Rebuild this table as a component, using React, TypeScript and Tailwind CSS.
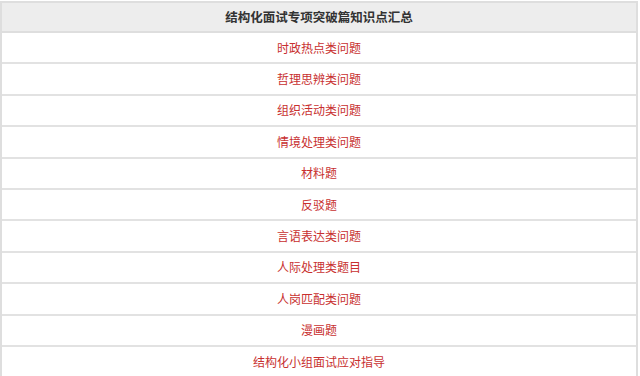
const items = [
  "时政热点类问题",
  "哲理思辨类问题",
  "组织活动类问题",
  "情境处理类问题",
  "材料题",
  "反驳题",
  "言语表达类问题",
  "人际处理类题目",
  "人岗匹配类问题",
  "漫画题",
  "结构化小组面试应对指导",
];

const App = () => {
  return (
    <div
      className="w-[640px] h-[376px] overflow-hidden bg-white pt-px"
      style={{ fontFamily: '"Noto Sans CJK SC", "Noto Sans", sans-serif' }}
    >
      <div className="w-[638px] border-t-2 border-x-2 border-[#dedede]">
        {/* Header */}
        <div className="h-[30px] bg-[#ededed] flex items-center justify-center border-b-2 border-[#dedede]">
          <span className="text-[12.5px] font-bold text-[#333]">结构化面试专项突破篇知识点汇总</span>
        </div>

        {/* Rows */}
        {items.map((item) => (
          <div
            key={item}
            className="h-[31.4px] flex items-center justify-center border-b-2 border-[#e2e2e2]"
          >
            <span className="text-[12px] text-[#c8302f]">{item}</span>
          </div>
        ))}
      </div>
    </div>
  );
};

export default App;
